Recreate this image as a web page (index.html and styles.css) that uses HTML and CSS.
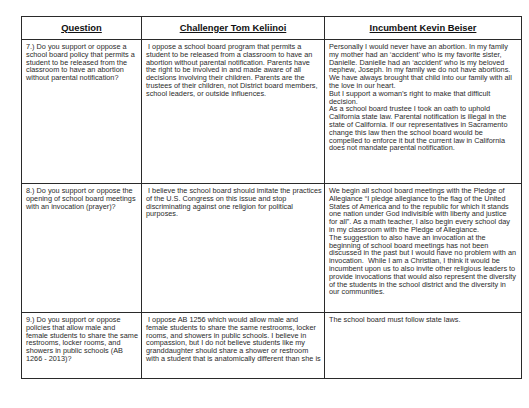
FILE: index.html
```html
<!DOCTYPE html>
<html>
<head>
<meta charset="utf-8">
<link rel="stylesheet" href="styles.css">
</head>
<body>
<table class="grid">
  <colgroup>
    <col class="c1"><col class="c2"><col class="c3">
  </colgroup>
  <tr class="head">
    <th>Question</th>
    <th>Challenger Tom Keliinoi</th>
    <th>Incumbent Kevin Beiser</th>
  </tr>
  <tr class="r7">
    <td>7.) Do you support or oppose a<br>school board policy that permits a<br>student to be released from the<br>classroom to have an abortion<br>without parental notification?</td>
    <td>&nbsp;I oppose a school board program that permits a<br>student to be released from a classroom to have an<br>abortion without parental notification. Parents have<br>the right to be involved in and made aware of all<br>decisions involving their children. Parents are the<br>trustees of their children, not District board members,<br>school leaders, or outside influences.</td>
    <td>Personally I would never have an abortion. In my family<br>my mother had an ‘accident’ who is my favorite sister,<br>Danielle. Danielle had an ‘accident’ who is my beloved<br>nephew, Joseph. In my family we do not have abortions.<br>We have always brought that child into our family with all<br>the love in our heart.<br>But I support a woman’s right to make that difficult<br>decision.<br>As a school board trustee I took an oath to uphold<br>California state law. Parental notification is illegal in the<br>state of California. If our representatives in Sacramento<br>change this law then the school board would be<br>compelled to enforce it but the current law in California<br>does not mandate parental notification.</td>
  </tr>
  <tr class="r8">
    <td>8.) Do you support or oppose the<br>opening of school board meetings<br>with an invocation (prayer)?</td>
    <td>&nbsp;I believe the school board should imitate the practices<br>of the U.S. Congress on this issue and stop<br>discriminating against one religion for political<br>purposes.</td>
    <td>We begin all school board meetings with the Pledge of<br>Allegiance “I pledge allegiance to the flag of the United<br>States of America and to the republic for which it stands<br>one nation under God indivisible with liberty and justice<br>for all”. As a math teacher, I also begin every school day<br>in my classroom with the Pledge of Allegiance.<br>The suggestion to also have an invocation at the<br>beginning of school board meetings has not been<br>discussed in the past but I would have no problem with an<br>invocation.&nbsp; While I am a Christian, I think it would be<br>incumbent upon us to also invite other religious leaders to<br>provide invocations that would also represent the diversity<br>of the students in the school district and the diversity in<br>our communities.</td>
  </tr>
  <tr class="r9">
    <td>9.) Do you support or oppose<br>policies that allow male and<br>female students to share the same<br>restrooms, locker rooms, and<br>showers in public schools (AB<br>1266 - 2013)?</td>
    <td>&nbsp;I oppose AB 1256 which would allow male and<br>female students to share the same restrooms, locker<br>rooms, and showers in public schools. I believe in<br>compassion, but I do not believe students like my<br>granddaughter should share a shower or restroom<br>with a student that is anatomically different than she is</td>
    <td>The school board must follow state laws.</td>
  </tr>
</table>
</body>
</html>
```
FILE: styles.css
```css
html, body {
  margin: 0;
  padding: 0;
  background: #ffffff;
}
body {
  padding: 16px 0 0 21px;
  font-family: "Liberation Sans", Arial, sans-serif;
  color: #2b2b2b;
}
.grid {
  border-collapse: collapse;
  table-layout: fixed;
  width: 500px;
}
.c1 { width: 120px; }
.c2 { width: 183px; }
.c3 { width: 197px; }
.grid th, .grid td {
  border: 1px solid #2a2a2a;
}
.grid th {
  font-size: 9.4px;
  font-weight: bold;
  text-decoration: underline;
  text-align: center;
  vertical-align: middle;
  padding: 0 0 2px 0;
  height: 20px;
  color: #111;
}
.grid td {
  font-size: 7.3px;
  line-height: 7.8px;
  vertical-align: top;
  white-space: nowrap;
  overflow: visible;
  padding: 3px 2px 2px 4px;
}
.r7 td { height: 138px; }
.r8 td { height: 123px; }
.r9 td { height: 60px; }
```
